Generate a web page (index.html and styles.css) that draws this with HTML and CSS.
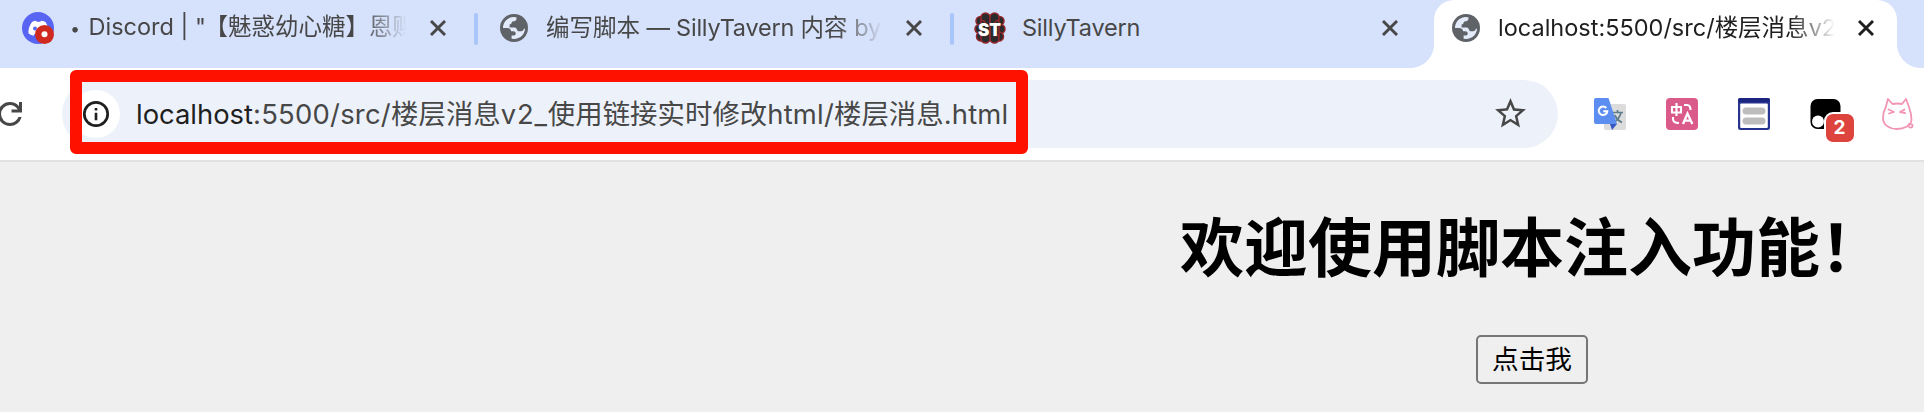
FILE: index.html
```html
<!DOCTYPE html>
<html lang="zh-CN">
<head>
<meta charset="utf-8">
<title>楼层消息</title>
<link rel="stylesheet" href="styles.css">
</head>
<body>
<svg class="defs" width="0" height="0">
  <symbol id="globe" viewBox="0 0 28 28">
    <circle cx="14" cy="14" r="14" fill="#5f6368"/>
    <path class="land" d="M3 14C3 8.500 7 3.600 13 3.100L16.300 3.300C17 5.200 16 7 14.200 7.300L12.400 7.600C11.600 7.900 11.800 9.400 11 9.900L9.600 10.600V13.500H14.500C17.500 13.500 16.500 17.300 18.800 17.300H21.500C23.500 17.300 23.400 14.600 25 14.600C24.900 20.500 20 25 14 25L11.600 24.700V21.500H14C15.500 21.500 15.700 20.500 15.700 19.300C15.700 18 14.800 17.200 13.200 17.200H11.200C10.600 15 9.300 14 7 14Z"/>
  </symbol>
  <symbol id="close" viewBox="0 0 16 16">
    <path d="M1 1L15 15M15 1L1 15" fill="none" stroke="currentColor" stroke-width="2.900"/>
  </symbol>
</svg>

<header class="tabs">
  <div class="tab first">
    <span class="favicon">
      <svg width="32" height="32" viewBox="0 0 32 32">
        <circle cx="16" cy="16" r="16" fill="#5865f2"/>
        <path d="M10 10Q12 8.700 14 8.700L14.600 9.800H18.400L19 8.700Q21 8.700 23.500 10Q27 15.500 26.500 21.500Q24 23.300 21.500 23.700L20.500 22H12.500L11.500 23.700Q8.500 23 6.500 21.500Q6 15.500 10 10Z" fill="#fff"/>
        <ellipse cx="13" cy="16.500" rx="1.900" ry="2.100" fill="#5865f2"/>
        <circle cx="22.500" cy="22.500" r="9.500" fill="#d02a20"/>
        <circle cx="22.500" cy="22.300" r="3" fill="#fff"/>
      </svg>
    </span>
    <span class="title fade"><span class="dot">•</span><span class="discord">Discord | "</span><span class="cjk bracket">【魅惑幼心糖】恩赐</span></span>
    <svg class="close" width="16" height="16"><use href="#close"/></svg>
  </div>
  <i class="sep"></i>
  <div class="tab">
    <span class="favicon"><svg width="28" height="28"><use href="#globe"/></svg></span>
    <span class="title fade"><span class="cjk">编写脚本</span><span class="mid"> — SillyTavern </span><span class="cjk">内容</span> by</span>
    <svg class="close" width="16" height="16"><use href="#close"/></svg>
  </div>
  <i class="sep"></i>
  <div class="tab">
    <span class="favicon">
      <svg width="32" height="32" viewBox="0 0 32 32">
        <g fill="#2b2a2c" stroke="#94282b" stroke-width="1.500">
          <circle cx="6.500" cy="9" r="4.500"/><circle cx="25.500" cy="9" r="4.500"/>
          <circle cx="5.500" cy="17" r="4.500"/><circle cx="26.500" cy="17" r="4.500"/>
          <circle cx="7" cy="24.500" r="4.500"/><circle cx="25" cy="24.500" r="4.500"/>
          <rect x="7" y="1" width="9" height="30" rx="4.500"/><rect x="16" y="1" width="9" height="30" rx="4.500"/>
          <path d="M7 8Q12 9 11 12M25 8Q20 9 21 12M7 25Q8 22 12 24M25 25Q24 22 20 24" fill="none"/>
        </g>
        <text class="st" x="15.500" y="24" text-anchor="middle" textLength="23" lengthAdjust="spacingAndGlyphs">ST</text>
      </svg>
    </span>
    <span class="title"><span class="silly">SillyTavern</span></span>
    <svg class="close" width="16" height="16"><use href="#close"/></svg>
  </div>
  <div class="tab active">
    <span class="favicon"><svg width="28" height="28"><use href="#globe"/></svg></span>
    <span class="title fade"><span class="local">localhost:5500/src/</span><span class="cjk">楼层消息</span>v2</span>
    <svg class="close" width="16" height="16"><use href="#close"/></svg>
  </div>
</header>

<div class="toolbar">
  <svg class="reload" width="36" height="36" viewBox="0 -960 960 960"><path fill="#474747" d="M480-160q-134 0-227-93t-93-227q0-134 93-227t227-93q69 0 132 28.500T720-690v-110h80v280H520v-80h168q-32-56-87.500-88T480-720q-100 0-170 70t-70 170q0 100 70 170t170 70q77 0 139-44t87-116h84q-28 106-114 173t-196 67Z"/></svg>
  <div class="omnibox">
    <span class="info">
      <svg width="28" height="28" viewBox="0 0 28 28"><circle cx="14" cy="14" r="11.700" fill="none" stroke="#1f1f1f" stroke-width="2.700"/><path d="M12.700 12.700h2.600v7.500h-2.600zM12.700 8h2.600v2.600h-2.600z" fill="#1f1f1f"/></svg>
    </span>
    <span class="url"><span class="host">localhost</span><span class="path1">:5500/src/</span><span class="cjk">楼层消息</span><span class="v2">v2_</span><span class="cjk">使用链接实时修改</span><span class="ext">html/</span><span class="cjk">楼层消息</span><span class="ext">.html</span></span>
    <svg class="star" width="37" height="37" viewBox="0 0 24 24"><path fill="#474747" d="M22 9.240l-7.190-.62L12 2 9.190 8.630 2 9.240l5.460 4.730L5.820 21 12 17.270 18.180 21l-1.630-7.030L22 9.240zM12 15.400l-3.760 2.270 1-4.280-3.320-2.880 4.380-.38L12 6.100l1.710 4.040 4.380.38-3.320 2.880 1 4.280L12 15.400z"/></svg>
    <div class="marker"></div>
  </div>
  <div class="extensions">
    <svg width="32" height="32" viewBox="0 0 32 32">
      <rect x="10" y="6" width="22" height="26" rx="2" fill="#dcdcdc"/>
      <path d="M18 14.500H29M23.500 12V14.500M27 14.500Q25.500 21 19.500 24.500M20.500 17Q23 22 28 24.500" fill="none" stroke="#607d8b" stroke-width="1.700"/>
      <path d="M16 26H23L18 32Z" fill="#3656c4"/>
      <path d="M2 0H14.500L23 26H2Q0 26 0 24V2Q0 0 2 0Z" fill="#5c8df0"/>
      <path d="M12.300 10A4.300 4.300 0 1 0 13.300 13.300H9.300" fill="none" stroke="#fff" stroke-width="2"/>
    </svg>
    <svg width="32" height="32" viewBox="0 0 32 32">
      <rect width="32" height="32" rx="4" fill="#da5a8a"/>
      <path d="M6 9H15V14.500H6ZM10.500 5V18M18 7H21Q24.500 7 24.500 12M7 19V21Q7 25 13 25" fill="none" stroke="#fff" stroke-width="2.100"/>
      <path d="M17 26L21.500 15.500L26.300 26M18.500 22.700H25" fill="none" stroke="#fff" stroke-width="2.300"/>
    </svg>
    <svg width="32" height="32" viewBox="0 0 32 32">
      <rect width="32" height="32" rx="2.500" fill="#26348f"/><rect y="0" width="32" height="4" rx="2" fill="#1c2580"/>
      <rect x="2.200" y="5.500" width="27.600" height="24.500" rx="1" fill="#fff"/>
      <rect x="4.500" y="9.500" width="23" height="7" rx="3.500" fill="#bdbdbd"/><rect x="4.500" y="19.500" width="23" height="7" rx="3.500" fill="#bdbdbd"/>
    </svg>
    <span class="monkey">
      <svg width="32" height="32" viewBox="0 0 32 32"><rect x="0.500" y="1" width="30" height="30" rx="7" fill="#000"/><circle cx="8" cy="23.500" r="6" fill="#fff"/><circle cx="21" cy="23" r="6" fill="#fff"/></svg>
      <b class="badge">2</b>
    </span>
    <svg width="32" height="32" viewBox="0 0 32 32" fill="none" stroke="#f294b4" stroke-width="1.800" stroke-linecap="round" stroke-linejoin="round">
      <path d="M3.500 10L6 1L10.500 6Q15.500 5 20 6L24 1L27 9Q29.500 16 29.500 22C29 28 21.500 31 15 31C7.500 31 1 27 1 20Q1 14 3.500 10"/>
      <path d="M26.500 26.500Q31 25.500 30.500 28T27 29M6.500 11.500L12 14L7 15.500M22.500 11.500L18 14L23 15"/>
    </svg>
  </div>
</div>

<main class="page">
  <h1>欢迎使用脚本注入功能！</h1>
  <button class="action">点击我</button>
</main>
</body>
</html>
```
FILE: styles.css
```css
* { box-sizing: border-box; }

body {
  margin: 0;
  width: 1924px;
  height: 412px;
  overflow: hidden;
  background: #efefef;
  font-family: Inter, "Noto Sans CJK SC", sans-serif;
}

.defs { position: absolute; }

.tabs {
  display: flex;
  height: 68px;
  overflow: hidden;
  background: #d6e1fb;
}

.tab {
  display: flex;
  flex: none;
  align-items: center;
  width: 472px;
  height: 56px;
  padding-left: 20px;
  color: #474747;
}

.tab.first { width: 474px; padding-left: 22px; }

.tab.active {
  position: relative;
  width: 463px;
  height: 68px;
  margin-left: 8px;
  padding: 0 0 12px 16px;
  border-radius: 20px 20px 0 0;
  background: #fff;
  color: #1f1f1f;
}

.tab.active::before,
.tab.active::after {
  content: "";
  position: absolute;
  bottom: 0;
  width: 24px;
  height: 24px;
}

.tab.active::before {
  right: 100%;
  background: radial-gradient(circle at 0 0, #d6e1fb 23.5px, #fff 24.5px);
}

.tab.active::after {
  left: 100%;
  background: radial-gradient(circle at 100% 0, #d6e1fb 23.5px, #fff 24.5px);
}

.favicon {
  display: flex;
  flex: none;
  justify-content: center;
  width: 32px;
  margin-right: 16px;
}

.land { fill: #e3ebfb; }

.st {
  fill: #fff;
  font: 900 17px Inter, sans-serif;
}

.title {
  flex: none;
  width: 352px;
  margin-right: 8px;
  overflow: hidden;
  font-size: 23.5px;
  line-height: 36px;
  white-space: pre;
}

.fade {
  -webkit-mask-image: linear-gradient(to right, #000 292px, transparent 337px);
  mask-image: linear-gradient(to right, #000 292px, transparent 337px);
}

.dot {
  display: inline-block;
  width: 18.5px;
  font-size: 18px;
}

.bracket { margin-left: -1.5px; }
.mid { letter-spacing: -0.22px; }
.silly { letter-spacing: -0.22px; }

.close { flex: none; }

.sep {
  flex: none;
  width: 4px;
  height: 32px;
  margin-top: 13px;
  border-radius: 2px;
  background: #a9c6fa;
}

.toolbar {
  display: flex;
  align-items: center;
  height: 94px;
  border-bottom: 2px solid #e0e2e0;
  background: #fff;
}

.reload { flex: none; margin-left: -8px; }

.omnibox {
  position: relative;
  display: flex;
  flex: none;
  align-items: center;
  width: 1496px;
  height: 68px;
  margin-left: 34px;
  padding-left: 10px;
  border-radius: 34px;
  background: #edf2fa;
}

.info {
  display: flex;
  align-items: center;
  justify-content: center;
  width: 48px;
  height: 48px;
  border-radius: 50%;
  background: #fff;
}

.url {
  margin-left: 16px;
  color: #474747;
  font-size: 27.4px;
  line-height: 40px;
  white-space: pre;
}

.host { color: #1f1f1f; }
.path1 { letter-spacing: 0.25px; }
.v2 { letter-spacing: 0.8px; }
.ext { letter-spacing: 0.2px; }
.url .cjk { letter-spacing: 0.05px; }

.star { position: absolute; right: 29.5px; top: 15px; }

.marker {
  position: absolute;
  left: 8px;
  top: -10px;
  width: 958px;
  height: 84px;
  border: 12px solid #ff1100;
  border-radius: 6px;
}

.extensions {
  display: flex;
  flex: none;
  gap: 40px;
  width: 320px;
  margin-left: 36px;
}

.extensions svg { display: block; }

.monkey { position: relative; width: 32px; }

.badge {
  position: absolute;
  left: 15.5px;
  top: 16px;
  width: 28px;
  height: 28px;
  border-radius: 7px;
  background: #dc443d;
  box-shadow: 0 0 0 2px #fff;
  color: #fff;
  font-size: 19px;
  line-height: 28px;
  text-align: center;
}

.page {
  display: flex;
  flex-direction: column;
  align-items: center;
  padding: 36px 0 0 1140px;
}

h1 {
  margin: 0;
  font-family: "Noto Sans CJK SC", sans-serif;
  font-size: 64px;
  font-weight: 700;
  line-height: 90px;
  white-space: nowrap;
}

.action {
  width: 112px;
  height: 49px;
  margin-top: 47px;
  padding: 0 0 3px;
  border: 2px solid #767676;
  border-radius: 5px;
  background: #efefef;
  color: #000;
  font: 26.67px/42px "Noto Sans CJK SC", sans-serif;
}
```
